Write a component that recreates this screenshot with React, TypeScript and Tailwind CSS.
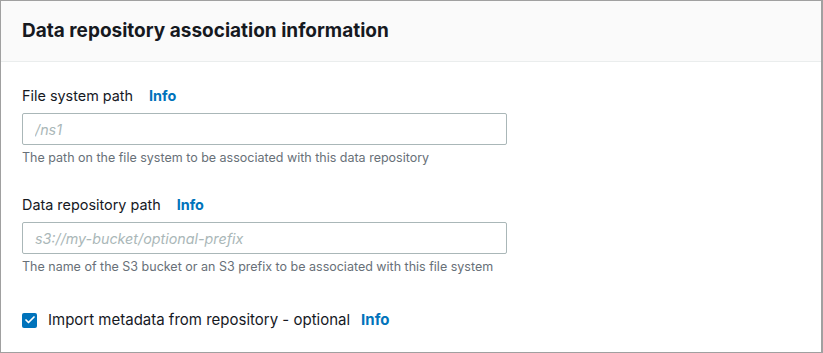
import { Check } from 'lucide-react';

function InfoLink({ gap = 'ml-[16px]' }: { gap?: string }) {
  return <a className={`${gap} font-bold text-[#0073bb] cursor-pointer`}>Info</a>;
}

function Field({ label, placeholder, hint }: { label: string; placeholder: string; hint: string }) {
  return (
    <div className="flex flex-col">
      <div className="flex items-center h-[22px] text-[14.4px] text-[#16191f]">
        <span>{label}</span>
        <InfoLink />
      </div>
      <input
        className="mt-[6px] w-[485px] h-[32px] px-[12px] rounded-[2px] border border-[#aab7b8] text-[14.3px] placeholder:italic placeholder:text-[#aab7b8] outline-none"
        placeholder={placeholder}
      />
      <div className="mt-[4px] text-[12.5px] leading-[18px] text-[#687078]">{hint}</div>
    </div>
  );
}

export default function App() {
  return (
    <div className="w-[823px] h-[353px] bg-white border border-[#a0a0a0] border-r-2 overflow-hidden" style={{ fontFamily: 'Inter, sans-serif' }}>
      <div className="h-[61px] bg-[#fafafa] border-b border-[#eaeded] flex items-center px-[21px]">
        <h2 className="text-[19px] font-bold text-[#16191f]">Data repository association information</h2>
      </div>
      <div className="px-[21px] pt-[23px] flex flex-col gap-[27px]">
        <Field
          label="File system path"
          placeholder="/ns1"
          hint="The path on the file system to be associated with this data repository"
        />
        <Field
          label="Data repository path"
          placeholder="s3://my-bucket/optional-prefix"
          hint="The name of the S3 bucket or an S3 prefix to be associated with this file system"
        />
        <label className="flex items-center mt-[6px] text-[15px] text-[#16191f]">
          <span className="w-[15px] h-[15px] rounded-[2px] bg-[#0073bb] flex items-center justify-center">
            <Check className="w-[12px] h-[12px] text-white" strokeWidth={3.5} />
          </span>
          <span className="ml-[11px]">Import metadata from repository - optional</span>
          <InfoLink gap="ml-[11px]" />
        </label>
      </div>
    </div>
  );
}
